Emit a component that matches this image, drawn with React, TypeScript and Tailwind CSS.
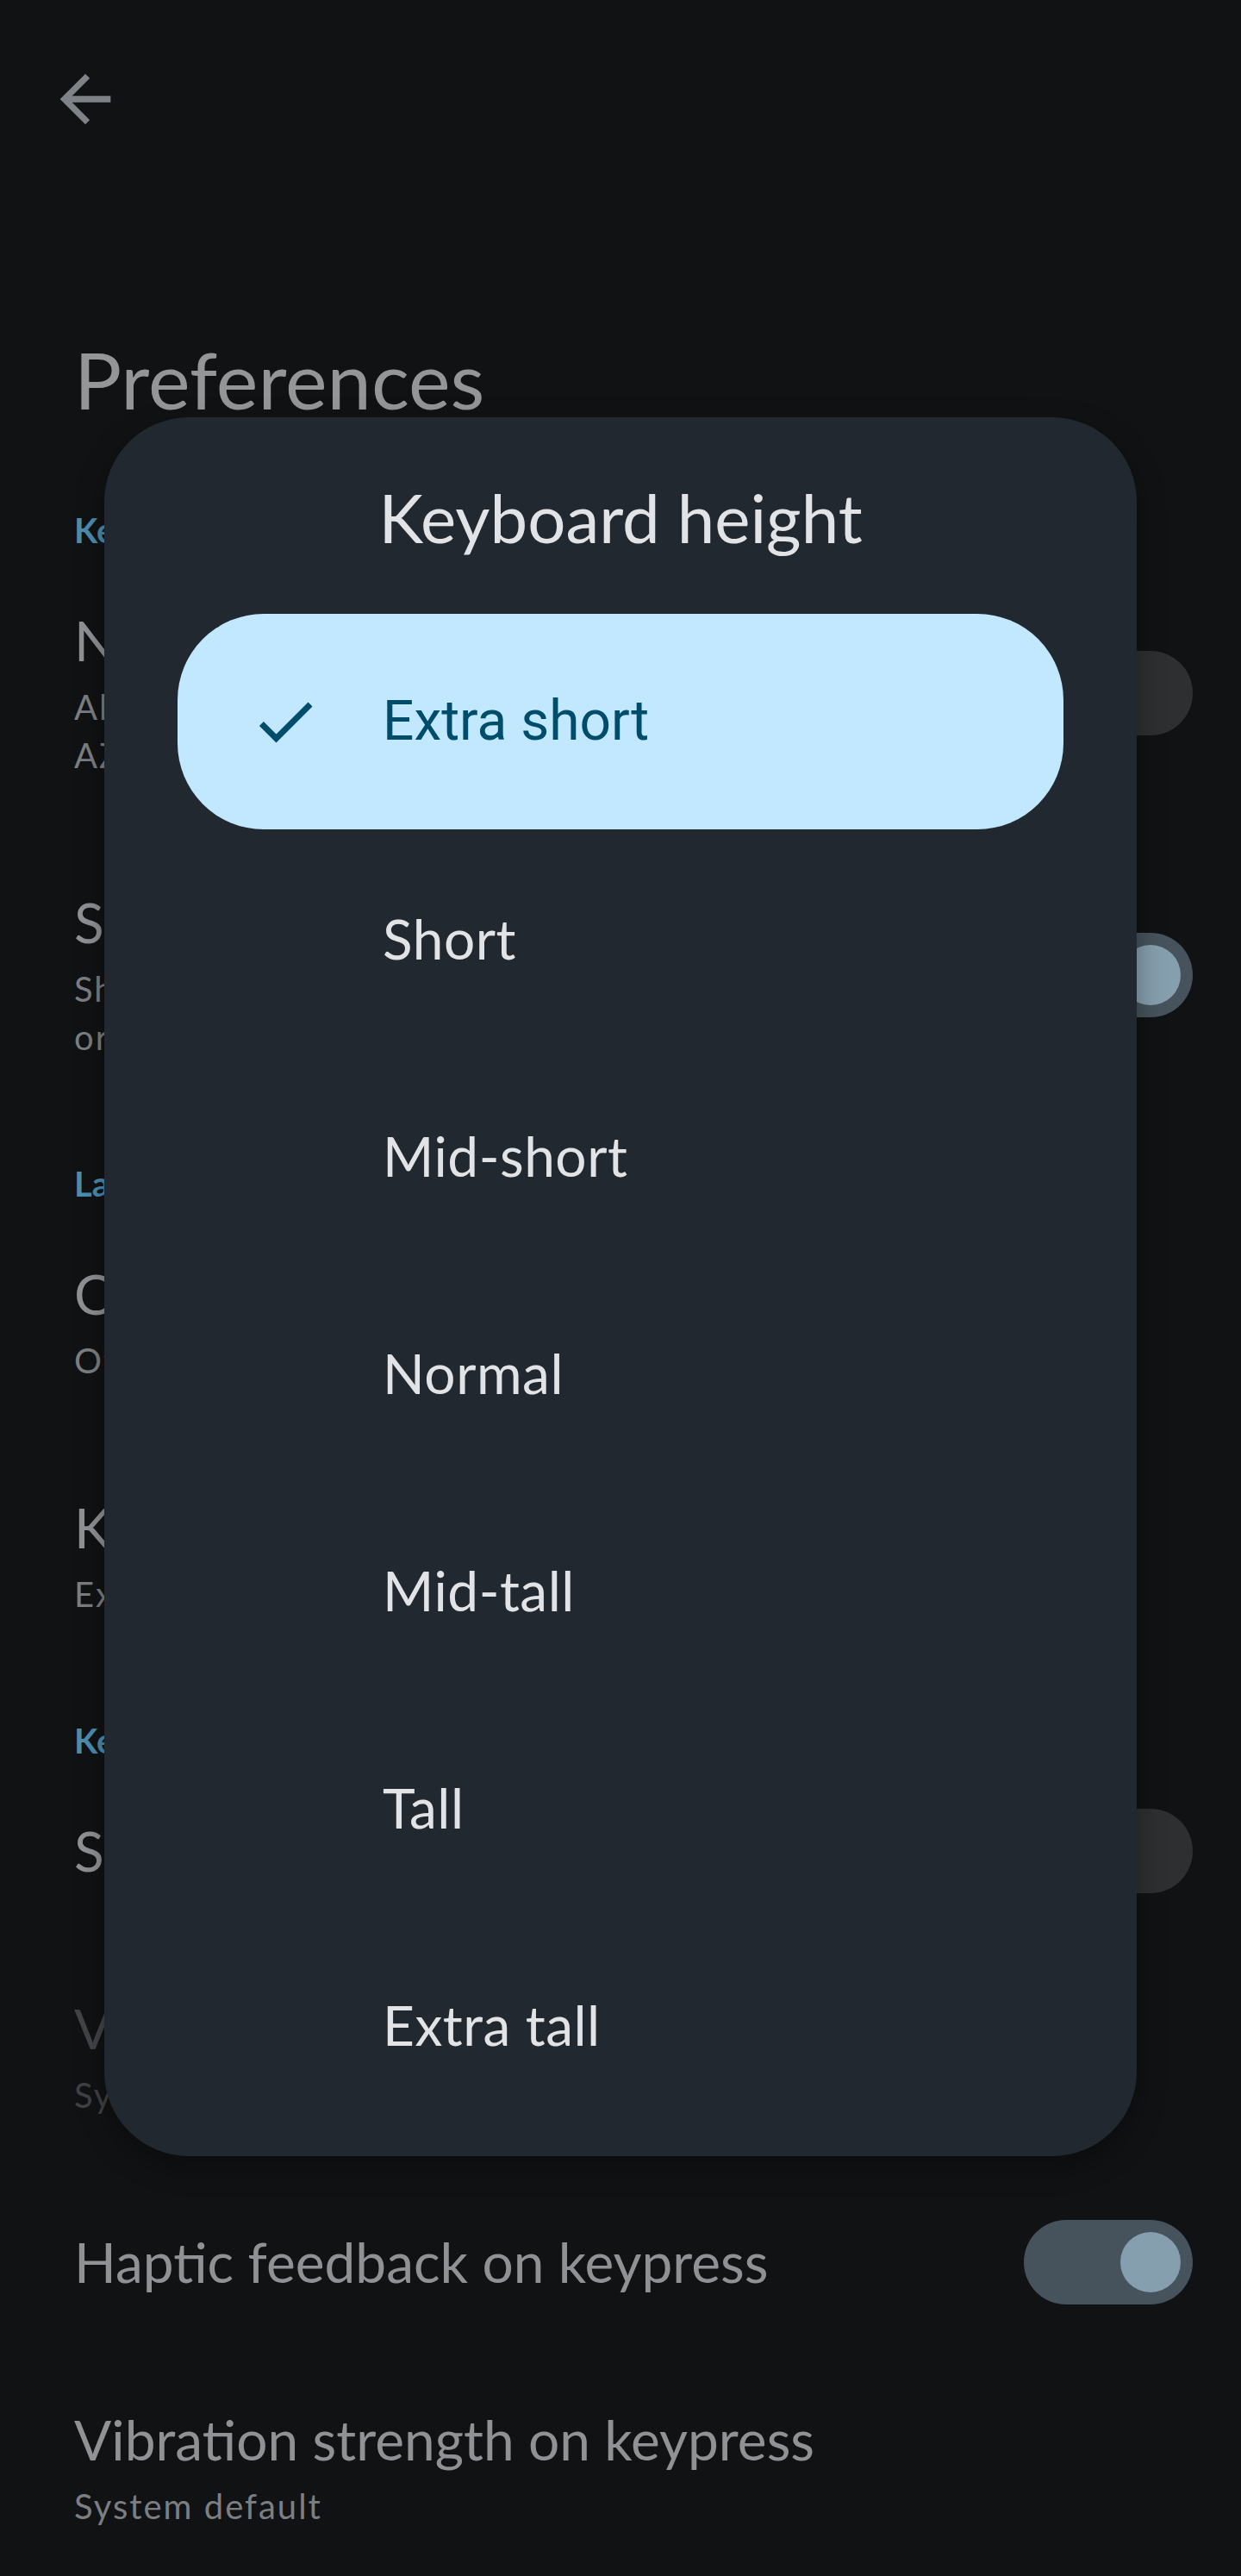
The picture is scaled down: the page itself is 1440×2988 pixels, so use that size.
import React from "react";

const sans = { fontFamily: "Lato, 'Noto Sans', sans-serif" };

type Row =
  | { kind: "header"; label: string }
  | {
      kind: "item";
      title: string;
      sub?: string[];
      toggle?: "on" | "off";
      disabled?: boolean;
    };

const rows: Row[] = [
  { kind: "header", label: "Keyboard" },
  {
    kind: "item",
    title: "Number row",
    sub: ["Always show the number row above", "AZERTY and QWERTY layouts"],
    toggle: "off",
  },
  {
    kind: "item",
    title: "Show symbol hints",
    sub: ["Show long-press symbols on keys", "or hide them for a cleaner look"],
    toggle: "on",
  },
  { kind: "header", label: "Layout" },
  { kind: "item", title: "Other layouts", sub: ["Other languages and layouts"] },
  { kind: "item", title: "Keyboard height", sub: ["Extra short"] },
  { kind: "header", label: "Key press" },
  { kind: "item", title: "Sound on keypress", toggle: "off" },
  {
    kind: "item",
    title: "Volume of keypress sound",
    sub: ["System default"],
    disabled: true,
  },
  { kind: "item", title: "Haptic feedback on keypress", toggle: "on" },
  {
    kind: "item",
    title: "Vibration strength on keypress",
    sub: ["System default"],
  },
];

const options = [
  "Extra short",
  "Short",
  "Mid-short",
  "Normal",
  "Mid-tall",
  "Tall",
  "Extra tall",
];

function Switch({ on }: { on: boolean }) {
  if (on) {
    return (
      <div className="w-[196px] h-[98px] shrink-0 rounded-full bg-[#46535c] flex items-center justify-end pr-[14px]">
        <div className="w-[70px] h-[70px] rounded-full bg-[#869fae]" />
      </div>
    );
  }
  return (
    <div className="w-[196px] h-[98px] shrink-0 rounded-full bg-[#2e2f31] flex items-center pl-[24px]">
      <div className="w-[46px] h-[46px] rounded-full bg-[#5b5d60]" />
    </div>
  );
}

function SettingRow({ row }: { row: Row }) {
  if (row.kind === "header") {
    return (
      <div className="pt-[54px] pl-[86px]">
        <p className="text-[40px] leading-[50px] font-bold text-[#4b8db1]">
          {row.label}
        </p>
      </div>
    );
  }
  return (
    <div className="flex items-center justify-between py-[63px] pl-[86px] pr-[56px]">
      <div className="flex flex-col">
        <p
          className={
            "text-[64px] leading-[80px] " +
            (row.disabled ? "text-[#424448]" : "text-[#8f9194]")
          }
        >
          {row.title}
        </p>
        {row.sub && (
          <div className="mt-[9px] flex flex-col">
            {row.sub.map((s) => (
              <p
                key={s}
                className={
                  "text-[40px] leading-[56px] tracking-[2px] " +
                  (row.disabled ? "text-[#3f4144]" : "text-[#7c7f82]")
                }
              >
                {s}
              </p>
            ))}
          </div>
        )}
      </div>
      {row.toggle && (
        <div className="h-[80px] flex items-center">
          <Switch on={row.toggle === "on"} />
        </div>
      )}
    </div>
  );
}

function HeightDialog() {
  return (
    <div className="absolute left-[121px] top-[484px] w-[1198px] h-[2017px] rounded-[98px] bg-[#22282f] shadow-[0_12px_32px_rgba(0,0,0,0.35)] pt-[60px] px-[85px]">
      <h2 className="text-[78px] leading-[112px] text-center text-[#e2e3e6]">
        Keyboard height
      </h2>
      <div className="mt-[56px] flex flex-col gap-[2px]">
        {options.map((o, i) => {
          const selected = i === 0;
          return (
            <div
              key={o}
              className={
                "h-[250px] flex items-center pl-[83px] rounded-[100px] " +
                (selected ? "bg-[#c2e8ff]" : "")
              }
            >
              <div className="w-[84px] h-[84px] shrink-0">
                {selected && (
                  <svg viewBox="0 0 24 24" width="84" height="84" fill="#004d6b">
                    <path d="M9 16.17L4.83 12l-1.42 1.41L9 19 21 7l-1.41-1.41L9 16.17z" />
                  </svg>
                )}
              </div>
              <span
                className={
                  "ml-[71px] " +
                  (selected
                    ? "text-[64px] text-[#004d6b]"
                    : "text-[64px] tracking-[0.5px] text-[#e1e3e6]")
                }
                style={
                  selected
                    ? { fontFamily: "Roboto, 'Liberation Sans', sans-serif" }
                    : undefined
                }
              >
                {o}
              </span>
            </div>
          );
        })}
      </div>
    </div>
  );
}

export default function App() {
  return (
    <div
      className="relative w-[1440px] h-[2988px] overflow-hidden bg-[#111214]"
      style={sans}
    >
      <div className="pt-[71px] pl-[55px]">
        <svg viewBox="0 0 24 24" width="88" height="88" fill="#7f8387">
          <path d="M20 11H7.83l5.59-5.59L12 4l-8 8 8 8 1.41-1.41L7.83 13H20v-2z" />
        </svg>
      </div>
      <h1 className="mt-[225px] pl-[86px] text-[92px] leading-[112px] text-[#939597]">
        Preferences
      </h1>
      <div className="mt-[40px]">
        {rows.map((r, i) => (
          <SettingRow key={i} row={r} />
        ))}
      </div>
      <HeightDialog />
    </div>
  );
}
